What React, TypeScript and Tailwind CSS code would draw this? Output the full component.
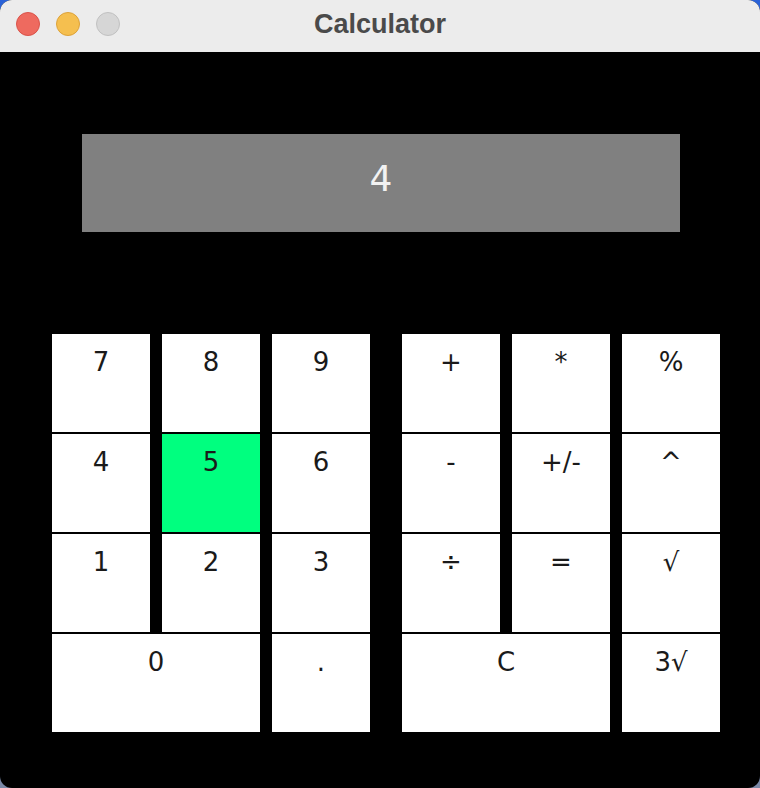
import React from "react";

type Key = { label: string; span?: boolean; green?: boolean };

const left: Key[] = [
  { label: "7" }, { label: "8" }, { label: "9" },
  { label: "4" }, { label: "5", green: true }, { label: "6" },
  { label: "1" }, { label: "2" }, { label: "3" },
  { label: "0", span: true }, { label: "." },
];

const right: Key[] = [
  { label: "+" }, { label: "*" }, { label: "%" },
  { label: "-" }, { label: "+/-" }, { label: "^" },
  { label: "÷" }, { label: "=" }, { label: "√" },
  { label: "C", span: true }, { label: "3√" },
];

function Group({ keys }: { keys: Key[] }) {
  return (
    <div className="grid grid-cols-[98px_98px_98px] auto-rows-[98px] gap-x-[12px] gap-y-[2px]">
      {keys.map((k) => (
        <div
          key={k.label}
          className={`${k.span ? "col-span-2" : ""} ${k.green ? "bg-[#00ff7f]" : "bg-white"} flex justify-center pt-[13px] text-[26px] leading-[30px] text-[#1a1a1a] font-['DejaVu_Sans',sans-serif]`}
        >
          {k.label}
        </div>
      ))}
    </div>
  );
}

export default function App() {
  return (
    <div className="w-[760px] h-[788px] bg-gradient-to-b from-[#2a62d8] to-[#7a88a6]">
      <div className="w-[760px] h-[788px] rounded-[12px] overflow-hidden flex flex-col bg-black">
        <div className="h-[52px] shrink-0 bg-[#ececec] grid grid-cols-[1fr_auto_1fr] items-center">
          <div className="flex items-center gap-[16px] pl-[16px] pb-[5px]">
            <div className="w-[24px] h-[24px] rounded-full bg-[#ee6a5f] border border-[#d9534a]" />
            <div className="w-[24px] h-[24px] rounded-full bg-[#f5bf4f] border border-[#dca23a]" />
            <div className="w-[24px] h-[24px] rounded-full bg-[#d6d6d6] border border-[#c0c0c0]" />
          </div>
          <div className="text-[27px] font-bold text-[#4a4a4a] font-['Liberation_Sans',sans-serif] pb-[4px]">
            Calculator
          </div>
          <div />
        </div>
        <div className="flex-1 flex flex-col">
          <div className="ml-[82px] mt-[82px] w-[598px] h-[98px] bg-[#808080] flex items-center justify-center pb-[8px] text-[36px] text-[#f2f2f2] font-['DejaVu_Sans',sans-serif]">
            4
          </div>
          <div className="ml-[52px] mt-[102px] flex gap-[32px]">
            <Group keys={left} />
            <Group keys={right} />
          </div>
        </div>
      </div>
    </div>
  );
}
